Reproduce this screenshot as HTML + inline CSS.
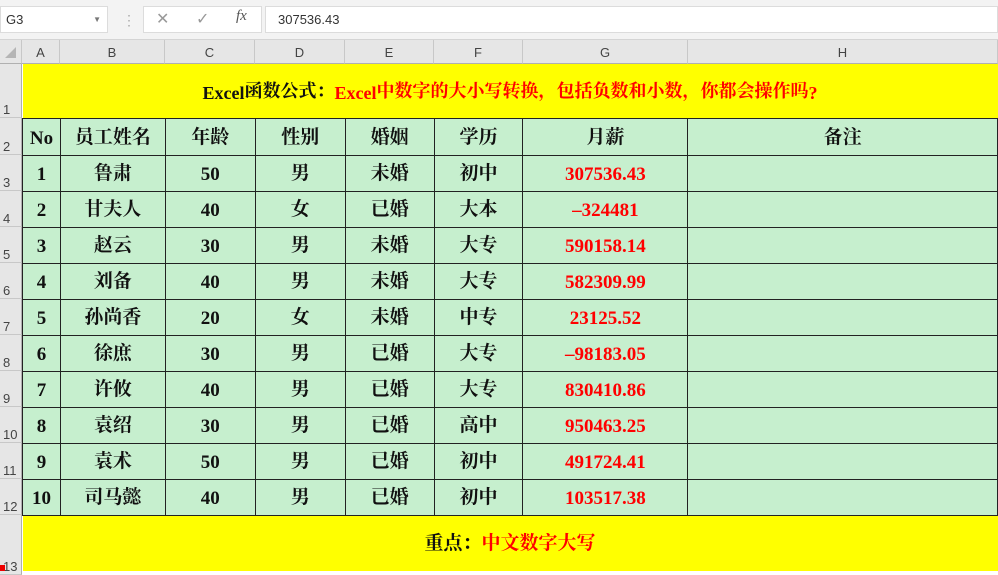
<!DOCTYPE html>
<html><head><meta charset="utf-8"><style>
*{margin:0;padding:0;box-sizing:border-box}
body{width:998px;height:571px;overflow:hidden;background:#fff;position:relative;font-family:"Liberation Serif","Noto Serif CJK SC",serif}
.bar{position:absolute;left:0;top:0;width:998px;height:40px;background:#f3f3f3;border-bottom:1px solid #d4d4d4}
.box{position:absolute;background:#fff;border:1px solid #dcdcdc;top:6px;height:27px;font:13px "Liberation Sans",sans-serif;color:#333;line-height:25px}
.ch{position:absolute;top:40px;height:24px;background:#e6e6e6;border-right:1px solid #c8c8c8;border-bottom:1px solid #b0b0b0;font:13px "Liberation Sans",sans-serif;color:#444;text-align:center;line-height:26px}
.rh{position:absolute;left:0;width:22px;background:#e6e6e6;border-bottom:1px solid #c8c8c8;border-right:1px solid #b0b0b0;font:13px "Liberation Sans",sans-serif;color:#444;}
.rh span{position:absolute;bottom:0;left:3px}
table{position:absolute;left:22px;top:64px;border-collapse:collapse;table-layout:fixed}
td{border:1px solid #222;text-align:center;font-weight:bold;font-size:19px;color:#111;background:#c6efce;padding:4px 0 0 0;height:36px;line-height:22px;vertical-align:middle}
td.c{font-family:"Noto Serif CJK SC",serif;font-size:19px;padding:0 0 2px 0}
td.r{color:#f00}
.y td{background:#ff0;border:none;border-bottom:1px solid #222}
.k{font-family:"Noto Serif CJK SC",serif;position:relative;top:-2px}
</style></head><body>
<div class="bar"></div>
<div class="box" style="left:0;width:108px;padding-left:5px">G3<span style="position:absolute;right:6px;top:0;font-size:8px;color:#777">▼</span></div>
<div style="position:absolute;left:122px;top:12px;color:#aaa;font:14px sans-serif">⋮</div>
<div class="box" style="left:143px;width:119px;color:#999"><span style="position:absolute;left:12px;top:0;font-size:16px">✕</span><span style="position:absolute;left:52px;top:0;font-size:16px">✓</span><span style="position:absolute;left:92px;top:1px;font:italic 15px 'Liberation Serif',serif;color:#555">fx</span></div>
<div class="box" style="left:265px;width:733px;padding-left:12px">307536.43</div>
<div class="ch" style="left:0;width:22px"><span style="position:absolute;left:5px;top:7px;width:0;height:0;border-left:11px solid transparent;border-bottom:11px solid #b5b5b5"></span></div>
<div class="ch" style="left:22px;width:38px">A</div>
<div class="ch" style="left:60px;width:105px">B</div>
<div class="ch" style="left:165px;width:90px">C</div>
<div class="ch" style="left:255px;width:90px">D</div>
<div class="ch" style="left:345px;width:89px">E</div>
<div class="ch" style="left:434px;width:89px">F</div>
<div class="ch" style="left:523px;width:165px">G</div>
<div class="ch" style="left:688px;width:310px">H</div>
<div class="rh" style="top:64px;height:54px"><span>1</span></div>
<div class="rh" style="top:118px;height:37px"><span>2</span></div>
<div class="rh" style="top:155px;height:36px"><span>3</span></div>
<div class="rh" style="top:191px;height:36px"><span>4</span></div>
<div class="rh" style="top:227px;height:36px"><span>5</span></div>
<div class="rh" style="top:263px;height:36px"><span>6</span></div>
<div class="rh" style="top:299px;height:36px"><span>7</span></div>
<div class="rh" style="top:335px;height:36px"><span>8</span></div>
<div class="rh" style="top:371px;height:36px"><span>9</span></div>
<div class="rh" style="top:407px;height:36px"><span>10</span></div>
<div class="rh" style="top:443px;height:36px"><span>11</span></div>
<div class="rh" style="top:479px;height:36px"><span>12</span></div>
<div class="rh" style="top:515px;height:60px"><span>13</span></div>
<div style="position:absolute;left:0;top:565px;width:5px;height:6px;background:#e00"></div>
<table>
<colgroup><col style="width:38px"><col style="width:105px"><col style="width:90px"><col style="width:90px"><col style="width:89px"><col style="width:89px"><col style="width:165px"><col style="width:310px"></colgroup>
<tr class="y"><td colspan="8" style="height:54px;font-size:18px">Excel<span class="k">函数公式：</span><span style="color:#f00">Excel<span class="k">中数字的大小写转换，包括负数和小数，你都会操作吗</span>?</span></td></tr>
<tr><td style="height:37px">No</td><td class="c">员工姓名</td><td class="c">年龄</td><td class="c">性别</td><td class="c">婚姻</td><td class="c">学历</td><td class="c">月薪</td><td class="c">备注</td></tr>
<tr><td>1</td><td class="c">鲁肃</td><td>50</td><td class="c">男</td><td class="c">未婚</td><td class="c">初中</td><td class="r">307536.43</td><td></td></tr>
<tr><td>2</td><td class="c">甘夫人</td><td>40</td><td class="c">女</td><td class="c">已婚</td><td class="c">大本</td><td class="r">–324481</td><td></td></tr>
<tr><td>3</td><td class="c">赵云</td><td>30</td><td class="c">男</td><td class="c">未婚</td><td class="c">大专</td><td class="r">590158.14</td><td></td></tr>
<tr><td>4</td><td class="c">刘备</td><td>40</td><td class="c">男</td><td class="c">未婚</td><td class="c">大专</td><td class="r">582309.99</td><td></td></tr>
<tr><td>5</td><td class="c">孙尚香</td><td>20</td><td class="c">女</td><td class="c">未婚</td><td class="c">中专</td><td class="r">23125.52</td><td></td></tr>
<tr><td>6</td><td class="c">徐庶</td><td>30</td><td class="c">男</td><td class="c">已婚</td><td class="c">大专</td><td class="r">–98183.05</td><td></td></tr>
<tr><td>7</td><td class="c">许攸</td><td>40</td><td class="c">男</td><td class="c">已婚</td><td class="c">大专</td><td class="r">830410.86</td><td></td></tr>
<tr><td>8</td><td class="c">袁绍</td><td>30</td><td class="c">男</td><td class="c">已婚</td><td class="c">高中</td><td class="r">950463.25</td><td></td></tr>
<tr><td>9</td><td class="c">袁术</td><td>50</td><td class="c">男</td><td class="c">已婚</td><td class="c">初中</td><td class="r">491724.41</td><td></td></tr>
<tr><td>10</td><td class="c">司马懿</td><td>40</td><td class="c">男</td><td class="c">已婚</td><td class="c">初中</td><td class="r">103517.38</td><td></td></tr>
<tr class="y"><td colspan="8" class="c" style="height:56px;border-bottom:none">重点：<span style="color:#f00">中文数字大写</span></td></tr>
</table>
</body></html>
